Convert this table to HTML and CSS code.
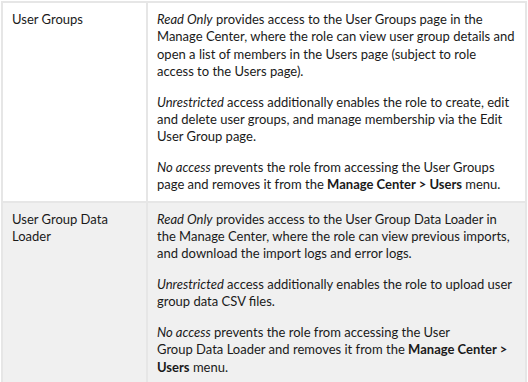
FILE: index.html
```html
<!DOCTYPE html>
<html lang="en">
<head>
    <meta charset="UTF-8">
    <meta name="viewport" content="width=device-width, initial-scale=1.0">
    <title>Role Permissions</title>
    <link rel="stylesheet" href="styles.css">
</head>
<body>
    <table class="perm-table">
        <tbody>
            <tr>
                <td class="perm-name">User Groups</td>
                <td class="perm-desc">
                    <p><em>Read Only</em> provides access to the User Groups page in the<br>
                    Manage Center, where the role can view user group details and<br>
                    open a list of members in the Users page (subject to role<br>
                    access to the Users page).</p>
                    <p><em>Unrestricted</em> access additionally enables the role to create, edit<br>
                    and delete user groups, and manage membership via the Edit<br>
                    User Group page.</p>
                    <p><em>No access</em> prevents the role from accessing the User Groups<br>
                    page and removes it from the <strong>Manage Center &gt; Users</strong> menu.</p>
                </td>
            </tr>
            <tr class="alt">
                <td class="perm-name">User Group Data<br>Loader</td>
                <td class="perm-desc">
                    <p><em>Read Only</em> provides access to the User Group Data Loader in<br>
                    the Manage Center, where the role can view previous imports,<br>
                    and download the import logs and error logs.</p>
                    <p><em>Unrestricted</em> access additionally enables the role to upload user<br>
                    group data CSV files.</p>
                    <p><em>No access</em> prevents the role from accessing the User<br>
                    Group Data Loader and removes it from the <strong>Manage Center &gt;</strong><br>
                    <strong>Users</strong> menu.</p>
                </td>
            </tr>
        </tbody>
    </table>
</body>
</html>
```

FILE: styles.css
```css
body {
    margin: 0;
    padding: 1px 1px 0 1px;
    background-color: #fff;
    font-family: "Lato", "Liberation Sans", sans-serif;
    font-size: 13px;
    line-height: 17.4px;
    color: #1a1a1a;
}

.perm-table {
    width: 526px;
    border-collapse: collapse;
    table-layout: fixed;
    border: 2px solid #e6e6e6;
}

.perm-table td {
    border: 2px solid #e6e6e6;
    vertical-align: top;
    padding: 8px 5px 7px 9px;
}

.perm-name {
    width: 129px;
}

.perm-desc p {
    margin: 0 0 13px 0;
    white-space: nowrap;
}

.perm-desc p:last-child {
    margin-bottom: 0;
}

.perm-desc em {
    font-style: italic;
}

.perm-desc strong {
    font-weight: bold;
}

.alt td {
    background-color: #f0f0f0;
}
```
